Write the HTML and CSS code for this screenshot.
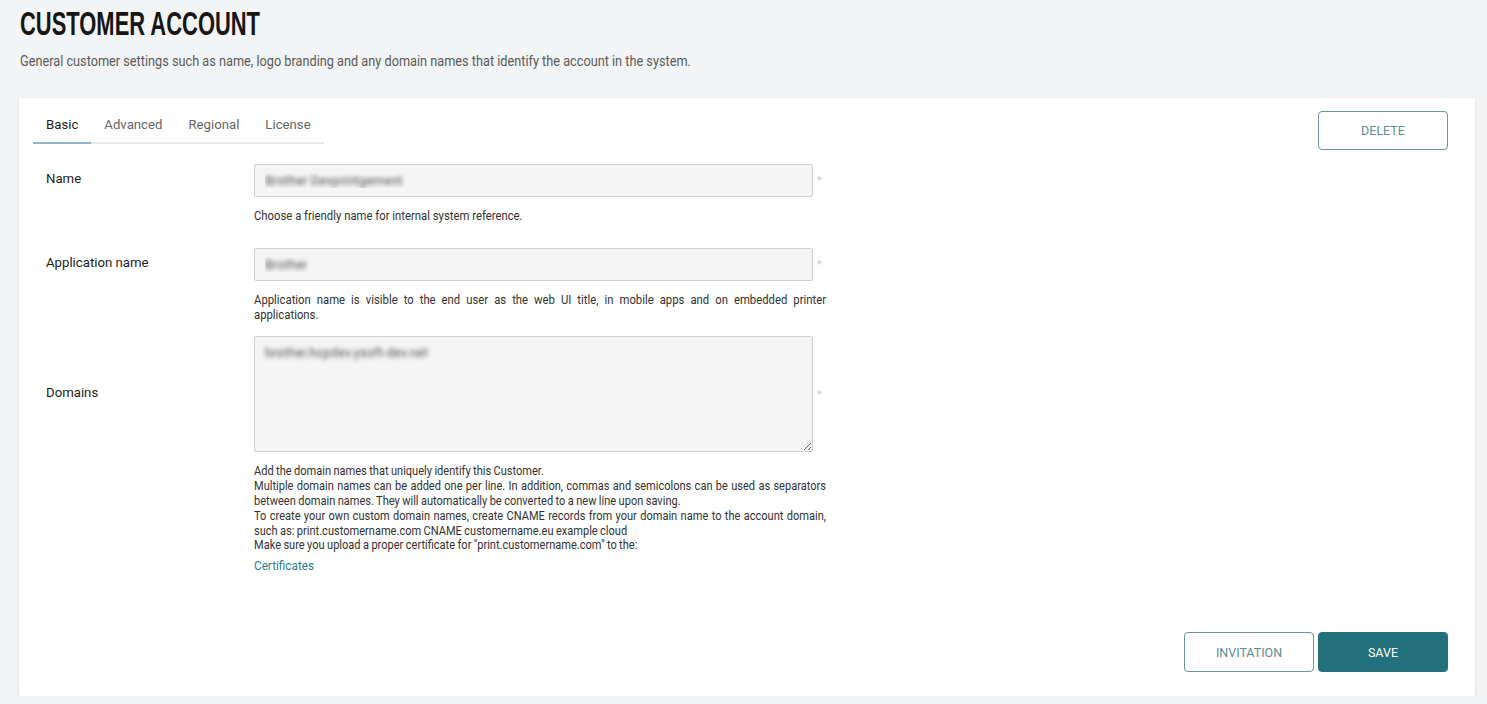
FILE: index.html
```html
<!DOCTYPE html>
<html lang="en">
<head>
  <meta charset="utf-8">
  <link rel="stylesheet" href="styles.css">
</head>
<body>
  <div class="page">
    <header class="page-header">
      <h1 class="title">CUSTOMER ACCOUNT</h1>
      <p class="subtitle">General customer settings such as name, logo branding and any domain names that identify the account in the system.</p>
    </header>

    <div class="card">
      <div class="card-top">
        <nav class="tabs">
          <a class="tab active">Basic</a>
          <a class="tab">Advanced</a>
          <a class="tab">Regional</a>
          <a class="tab">License</a>
        </nav>
        <button class="button outline">DELETE</button>
      </div>

      <form class="form">
        <div class="row">
          <label class="label" for="name">Name</label>
          <div class="field">
            <div class="control">
              <input id="name" class="input" type="text" value="Brother Devprintgement">
              <span class="required">*</span>
            </div>
            <div class="help single">
              <p class="narrow">Choose a friendly name for internal system reference.</p>
            </div>
          </div>
        </div>

        <div class="row">
          <label class="label" for="app-name">Application name</label>
          <div class="field">
            <div class="control">
              <input id="app-name" class="input" type="text" value="Brother">
              <span class="required">*</span>
            </div>
            <div class="help">
              <p class="narrow">Application name is visible to the end user as the web UI title, in mobile apps and on embedded printer applications.</p>
            </div>
          </div>
        </div>

        <div class="row">
          <label class="label domains" for="domains">Domains</label>
          <div class="field">
            <div class="control">
              <textarea id="domains" class="input textarea">brother.hcpdev.ysoft-dev.net</textarea>
              <span class="required">*</span>
            </div>
            <div class="help">
              <div class="narrow tight">
                <p>Add the domain names that uniquely identify this Customer.</p>
                <p>Multiple domain names can be added one per line. In addition, commas and semicolons can be used as separators between domain names. They will automatically be converted to a new line upon saving.</p>
                <p>To create your own custom domain names, create CNAME records from your domain name to the account domain, such as: print.customername.com CNAME customername.eu example cloud</p>
                <p>Make sure you upload a proper certificate for "print.customername.com" to the:</p>
              </div>
            </div>
            <div class="link-line">
              <a class="link narrow" href="#">Certificates</a>
            </div>
          </div>
        </div>
      </form>

      <div class="card-footer">
        <button class="button outline">INVITATION</button>
        <button class="button primary">SAVE</button>
      </div>
    </div>
  </div>
</body>
</html>
```

FILE: styles.css
```css
* {
  box-sizing: border-box;
}

body {
  margin: 0;
  background: #f3f4f5;
  font-family: Roboto, "Liberation Sans", sans-serif;
  color: #333;
}

/* squeezes the text to a condensed look */
.narrow {
  width: calc(100% / 0.87);
  transform: scaleX(0.87);
  transform-origin: left top;
}

.narrow.tight {
  width: calc(100% / 0.85);
  transform: scaleX(0.85);
  word-spacing: -0.4px;
}

.page {
  padding: 0 12px 0 19px;
}

.page-header {
  padding: 6px 0 0 1px;
  height: 98px;
}

.title {
  display: inline-block;
  margin: 0;
  font-family: "Liberation Sans", Roboto, sans-serif;
  font-size: 34px;
  line-height: 34px;
  font-weight: 700;
  color: #161616;
  transform: scaleX(0.645);
  transform-origin: left center;
}

.subtitle {
  margin: 12px 0 0;
  font-size: 15px;
  line-height: 18px;
  color: #5a5a5a;
  white-space: nowrap;
  transform: scaleX(0.848);
  transform-origin: left center;
}

.card {
  background: #fff;
  border-radius: 2px;
  box-shadow: 0 1px 3px rgba(0, 0, 0, 0.12);
  padding: 13px 27px 24px;
}

.card-top {
  display: flex;
  justify-content: space-between;
  align-items: flex-start;
}

.tabs {
  display: flex;
  margin-left: -13px;
}

.tab {
  padding: 5px 13px 9px;
  font-size: 13.2px;
  line-height: 17px;
  color: #666;
  border-bottom: 2px solid #e7eaec;
  cursor: pointer;
}

.tab.active {
  color: #1e1e1e;
  border-bottom-color: #8fb3c8;
}

.button {
  width: 130px;
  height: 39px;
  border-radius: 4px;
  font-family: Roboto, "Liberation Sans", sans-serif;
  font-size: 12.5px;
  cursor: pointer;
}

.button.outline {
  background: #fff;
  border: 1px solid #6b959b;
  color: #5d8c93;
}

.button.primary {
  background: #22717c;
  border: 1px solid #22717c;
  color: #fff;
}

.form {
  margin-top: 14px;
}

.row {
  display: flex;
  margin-bottom: 14px;
}

.label {
  width: 208px;
  flex-shrink: 0;
  font-size: 13.2px;
  line-height: 17px;
  color: #1e1e1e;
  align-self: flex-start;
  margin-top: 6px;
}

.label.domains {
  margin-top: 48px;
}

.field {
  width: 572px;
}

.control {
  display: flex;
  align-items: center;
}

.input {
  width: 559px;
  height: 33px;
  padding: 0 10px;
  background: #f5f5f5;
  border: 1px solid #cfcfcf;
  border-radius: 2px;
  font-family: Roboto, "Liberation Sans", sans-serif;
  font-size: 13px;
  color: transparent;
  text-shadow: 0 0 4px rgba(60, 60, 60, 0.85);
}

.textarea {
  height: 116px;
  padding: 8px 10px;
  resize: vertical;
}

.required {
  margin-left: 4px;
  font-size: 11px;
  color: #c8c8c8;
}

.help {
  margin-top: 12px;
  font-size: 13px;
  line-height: 14.8px;
  color: #333;
  text-align: justify;
}

.help.single {
  margin-bottom: 10px;
}

.help p {
  margin: 0;
}

.link-line {
  margin-top: 4px;
}

.link {
  display: block;
  font-size: 13.5px;
  line-height: 16px;
  color: #2a7f8e;
  text-decoration: none;
}

.card-footer {
  display: flex;
  justify-content: flex-end;
  gap: 4px;
  margin-top: 59px;
}

.card-footer .button {
  height: 40px;
}
```
